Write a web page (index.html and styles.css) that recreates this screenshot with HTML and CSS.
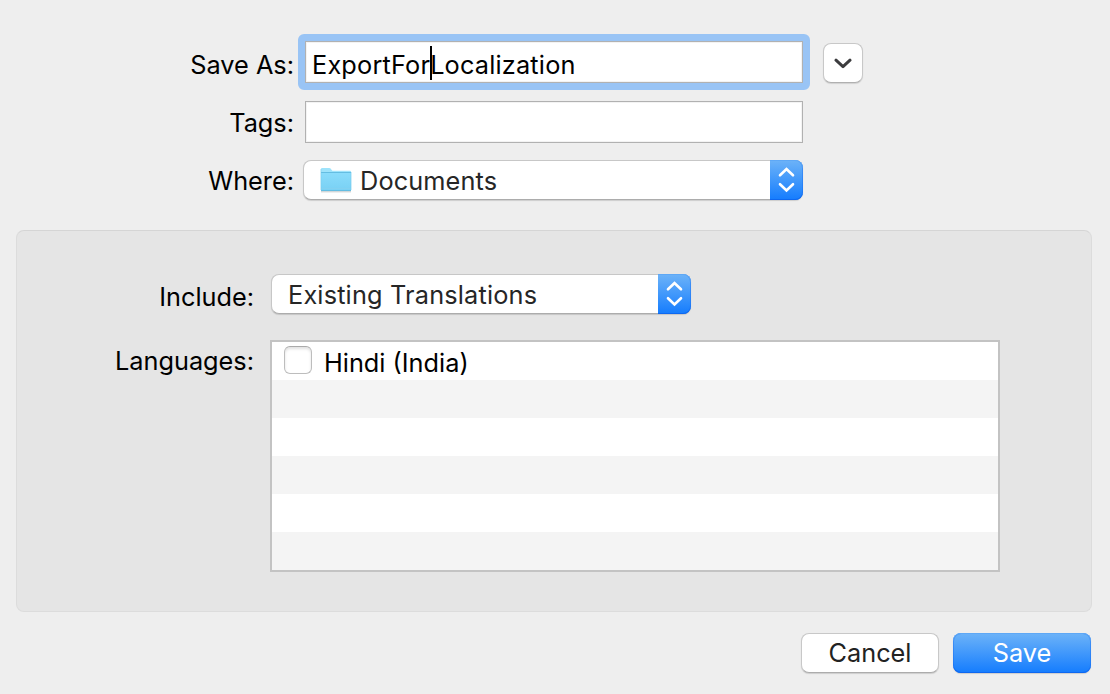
FILE: index.html
```html
<!DOCTYPE html>
<html lang="en">
<head>
<meta charset="utf-8">
<title>Save</title>
<link rel="stylesheet" href="styles.css">
</head>
<body>
<main class="sheet">
  <section class="file-form">
    <div class="row row-name">
      <label class="label"><span class="t-saveas">Save As:</span></label>
      <div class="field field-focused"><span class="t-name">ExportFor<i class="caret"></i>Localization</span></div>
      <button class="disclosure" aria-label="Collapse">
        <svg width="18" height="12" viewBox="0 0 18 12"><path d="M2 2.200 9 8.600 16 2.200" fill="none" stroke="#3c3c3e" stroke-width="3" stroke-linecap="round" stroke-linejoin="round"/></svg>
      </button>
    </div>
    <div class="row row-tags">
      <label class="label"><span class="t-tags">Tags:</span></label>
      <div class="field"></div>
    </div>
    <div class="row row-where">
      <label class="label"><span class="t-where">Where:</span></label>
      <div class="popup popup-where">
        <svg class="folder" width="32" height="26" viewBox="0 0 32 26">
          <defs><linearGradient id="fg" x1="0" y1="0" x2="0" y2="1"><stop offset="0" stop-color="#8adcfb"/><stop offset="1" stop-color="#78d0f4"/></linearGradient></defs>
          <path d="M1 24.800h30" stroke="#bfc6c9" stroke-width="1"/>
          <path d="M1 2Q1 1 2 1h7.300q.8 0 1.300.6l1.300 1.600q.4.5 1.100.5H30q1 0 1 1V10H1Z" fill="#9ee3fb"/>
          <path d="M1 5.500h30V23q0 1-1 1H2q-1 0-1-1Z" fill="url(#fg)"/>
          <path d="M1 5.500h30M1 23.500h30" stroke="#64bde2" stroke-width="1"/>
          <path d="M1 21.500h30" stroke="#82d1f1" stroke-width="1"/>
          <path d="M.9 2v21M31.100 5v18" stroke="#73c9eb" stroke-width=".6"/>
        </svg>
        <span class="popup-text t-docs">Documents</span>
        <span class="stepper"><svg width="17" height="26" viewBox="0 0 17 26"><path d="M2 8.300 8.500 2 15 8.300M2 17.200 8.500 23.500 15 17.200" fill="none" stroke="#fff" stroke-width="2.600" stroke-linecap="round" stroke-linejoin="miter"/></svg></span>
      </div>
    </div>
  </section>

  <section class="panel">
    <div class="row row-include">
      <label class="label"><span class="t-include">Include:</span></label>
      <div class="popup popup-include">
        <span class="popup-text t-existing">Existing Translations</span>
        <span class="stepper"><svg width="17" height="26" viewBox="0 0 17 26"><path d="M2 8.300 8.500 2 15 8.300M2 17.200 8.500 23.500 15 17.200" fill="none" stroke="#fff" stroke-width="2.600" stroke-linecap="round" stroke-linejoin="miter"/></svg></span>
      </div>
    </div>
    <div class="row row-languages">
      <label class="label"><span class="t-languages">Languages:</span></label>
      <ul class="list">
        <li class="item"><span class="checkbox"></span><span class="item-text t-hindi">Hindi (India)</span></li>
        <li class="item"></li>
        <li class="item"></li>
        <li class="item"></li>
        <li class="item"></li>
        <li class="item"></li>
      </ul>
    </div>
  </section>

  <footer class="actions">
    <button class="button"><span class="t-cancel">Cancel</span></button>
    <button class="button button-default"><span class="t-save">Save</span></button>
  </footer>
</main>
</body>
</html>
```
FILE: styles.css
```css
* { box-sizing: border-box; }
body {
  margin: 0;
  background: #eeeeee;
  color: #000;
  font: 400 25.3px/30px Inter, "Liberation Sans", sans-serif;
}
.sheet { width: 1110px; height: 694px; overflow: hidden; padding: 41px 19px 0 16px; }
.row { display: flex; align-items: flex-start; white-space: nowrap; }
.label { flex: none; text-align: right; }
.label span { display: inline-block; }
.file-form { height: 189px; }
.file-form .label { width: 278px; margin-right: 11px; }
.row-name { height: 60px; }
.row-name .label { padding-top: 9px; }
.row-tags { height: 59px; }
.row-tags .label { padding-top: 7px; }
.file-form .row-where .label { padding-top: 6px; margin-right: 9px; }

.field {
  width: 498px;
  height: 42px;
  padding: 8px 0 0 6px;
  border: 1px solid #b1b1b1;
  background: #fff;
  box-shadow: inset 0 0 0 1px #f3f3f3;
}
.field-focused { position: relative; }
.field-focused::before {
  content: "";
  position: absolute;
  inset: -8px;
  border: 7px solid #99c4f5;
  border-radius: 6px;
}
.t-name { letter-spacing: 0.18px; }
.t-docs { letter-spacing: 0.12px; }
.t-existing { letter-spacing: 0.17px; }
.caret { position: relative; display: inline-block; width: 0; height: 0; }
.caret::after { content: ""; position: absolute; left: 0; top: -28px; width: 2px; height: 34px; background: #000; }

.disclosure {
  display: flex;
  align-items: center;
  justify-content: center;
  width: 40px;
  height: 40px;
  margin: 2px 0 0 20px;
  padding: 2px 0 0;
  border: 1px solid #c8c8c8;
  border-bottom-color: #b0b0b0;
  border-radius: 8px;
  background: #fff;
  box-shadow: 0 1px 1px rgba(0,0,0,.12);
}

.popup {
  display: flex;
  align-items: flex-start;
  height: 40px;
  border: 1px solid #c7c7c7;
  border-bottom-color: #acacac;
  border-radius: 8px;
  background: #fff;
  box-shadow: 0 1px 1px rgba(0,0,0,.14);
  color: #262626;
}
.popup-where { width: 500px; padding-left: 16px; }
.popup-include { width: 420px; padding-left: 16px; }
.folder { margin: 6px 8px 0 0; }
.popup-text { margin-top: 5px; }
.stepper {
  display: flex;
  align-items: center;
  justify-content: center;
  width: 33px;
  height: 40px;
  margin: -1px -1px 0 auto;
  border-radius: 0 8px 8px 0;
  background: linear-gradient(#6db3f8, #4198fb 50%, #147cfe);
  box-shadow: inset 0 1px 0 #5ea8f6, inset 0 -1px 0 #0e68f0, inset -1px 0 0 rgba(20,105,240,.4);
}

.panel {
  width: 1076px;
  height: 382px;
  padding-top: 43px;
  border: 1px solid #dcdcdc;
  border-top-color: #d5d5d5;
  border-radius: 8px;
  background: #e5e5e5;
}
.panel .label { width: 237px; margin-right: 16px; }
.row-include { height: 66px; }
.panel .row-include .label { padding-top: 8px; margin-right: 17px; }
.row-languages .label { padding-top: 6px; }
.list {
  width: 730px;
  height: 232px;
  margin: 0;
  padding: 0;
  list-style: none;
  border: 2px solid #c3c3c3;
  background: #fff;
}
.item { display: flex; height: 38px; padding: 4px 0 0 12px; }
.item:nth-child(even) { background: #f4f4f4; }
.checkbox {
  width: 28px;
  height: 28px;
  margin-right: 12px;
  border: 1px solid #bdbdbd;
  border-top-color: #aaa;
  border-radius: 6px;
  background: #fff;
  box-shadow: inset 0 2px 3px rgba(0,0,0,.12);
}
.item-text { margin-top: 2px; }

.actions { display: flex; justify-content: flex-end; gap: 14px; padding-top: 21px; }
.button {
  width: 138px;
  height: 40px;
  padding: 0;
  border: 1px solid #c8c8c8;
  border-bottom-color: #acacac;
  border-radius: 8px;
  background: #fff;
  color: #222;
  font: inherit;
  box-shadow: 0 1px 1px rgba(0,0,0,.14);
}
.button-default {
  border: 0;
  background: linear-gradient(#6db3f8, #4198fb 50%, #147cfe);
  box-shadow: inset 0 1px 0 #5ea8f6, inset 0 -1px 0 #0e68f0, inset 0 0 0 1px rgba(20,105,240,.4), 0 1px 1px rgba(0,0,0,.14);
  color: #fff;
}
```
